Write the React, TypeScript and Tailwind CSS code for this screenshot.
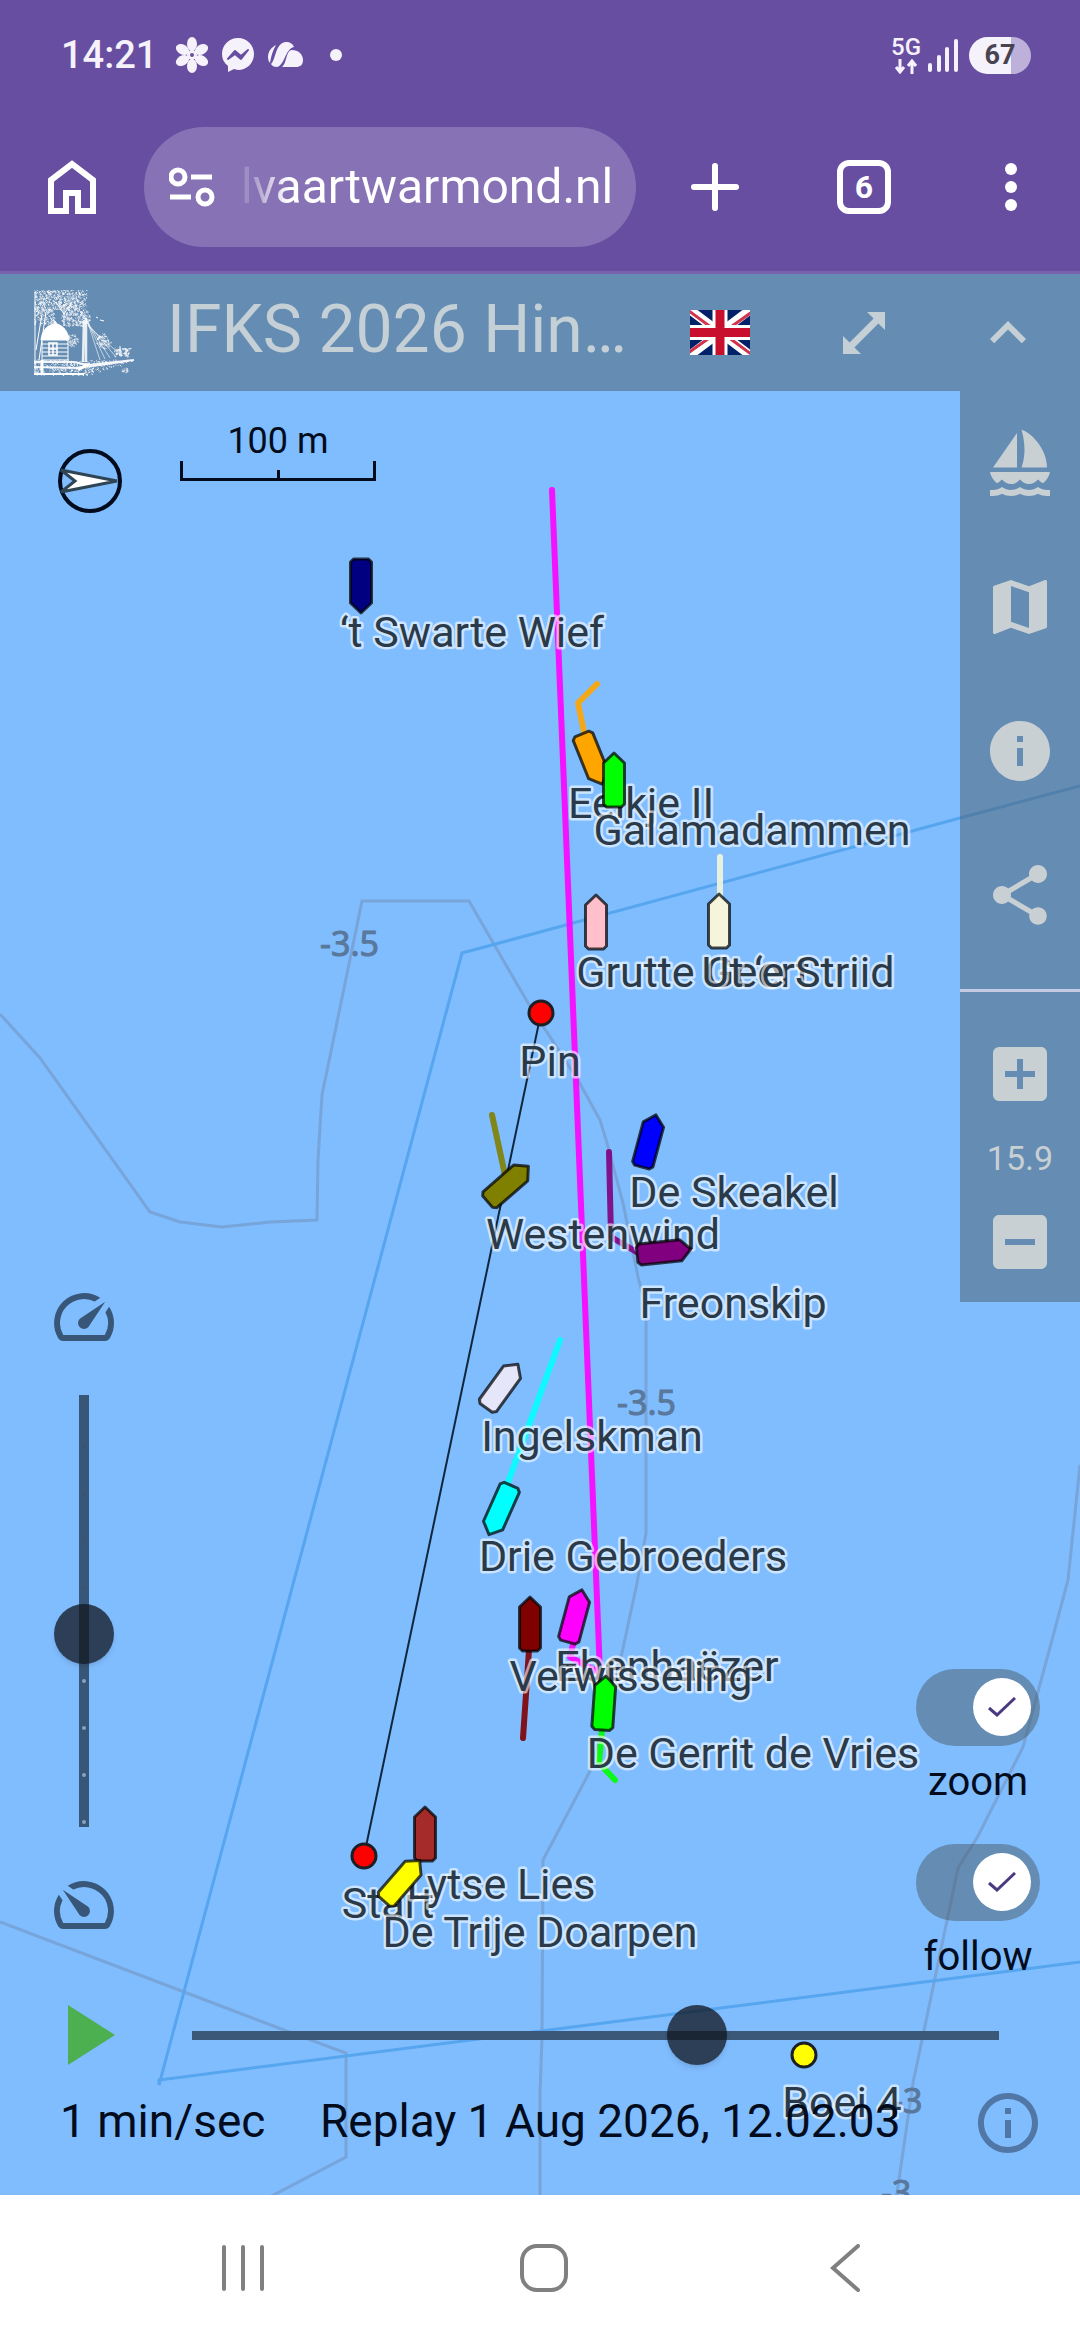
import { useState } from "react";
import type { ReactNode } from "react";
import {
  MdAddBox,
  MdExpandLess,
  MdIndeterminateCheckBox,
  MdInfo,
  MdMap,
  MdOutlineInfo,
  MdSailing,
  MdShare,
  MdSpeed,
} from "react-icons/md";

type Boat = { name: string; x: number; y: number; turn: number; color: string; track?: string; label: [number, number] };

const boats: Boat[] = [
  { name: "‘t Swarte Wief", x: 361, y: 586, turn: 180, color: "#000080", label: [472, 647] },
  { name: "Eelkje II", x: 592, y: 759, turn: 158, color: "#ffa500", track: "597,684 578,703 584,732", label: [641, 818] },
  { name: "Galamadammen", x: 614, y: 780, turn: 0, color: "#00ff00", label: [752, 845] },
  { name: "Grutte Geert", x: 596, y: 922, turn: 0, color: "#ffc0cb", label: [693, 987] },
  { name: "Ut ‘e Striid", x: 719, y: 921, turn: 0, color: "#f5f5dc", track: "720,857 720,900", label: [798, 987] },
  { name: "De Skeakel", x: 649, y: 1141, turn: 15, color: "#0000ff", label: [734, 1207] },
  { name: "Westenwind", x: 508, y: 1184, turn: 49, color: "#808000", track: "492,1115 505,1175", label: [603, 1249] },
  { name: "Freonskip", x: 664, y: 1252, turn: 84, color: "#800080", track: "609,1152 611,1237 640,1254", label: [733, 1318] },
  { name: "Ingelskman", x: 502, y: 1386, turn: 36, color: "#e6e6fa", label: [592, 1451] },
  { name: "Drie Gebroeders", x: 500, y: 1510, turn: 204, color: "#00ffff", track: "560,1340 507,1485", label: [633, 1571] },
  { name: "Ebenhaëzer", x: 575, y: 1616, turn: 15, color: "#ff00ff", track: "552,490 600,1673 570,1657 574,1640", label: [667, 1681] },
  { name: "Verwisseling", x: 530, y: 1624, turn: 0, color: "#800000", track: "523,1738 529,1650", label: [631, 1691] },
  { name: "De Gerrit de Vries", x: 604, y: 1703, turn: 4, color: "#00ff00", track: "615,1780 599,1763 602,1730", label: [753, 1768] },
  { name: "Lytse Lies", x: 425, y: 1834, turn: 0, color: "#a52a2a", label: [501, 1899] },
  { name: "De Trije Doarpen", x: 402, y: 1881, turn: 41, color: "#ffff00", label: [540, 1947] },
];

const marks = [
  { name: "Pin", x: 541, y: 1013, color: "#ff0000", label: [550, 1076] },
  { name: "Start", x: 364, y: 1856, color: "#ff0000", label: [388, 1918] },
  { name: "Boei 4", x: 804, y: 2055, color: "#ffff00", label: [842, 2117] },
];

const contours = [
  "0,1014 40,1058 150,1212 180,1222 222,1227 270,1222 317,1220 318,1160 322,1095 362,901 469,901 528,1003 578,1080 600,1120 607,1143 623,1203 638,1277 646,1307 646,1533 637,1583 622,1653 590,1771 543,1860 542,2037 540,2093 540,2200",
  "0,1922 179,1990 284,2030 346,2053 346,2157 264,2200",
  "1080,1465 1068,1580 1052,1640 1023,1747 978,1836 958,1868 913,2083 896,2200",
];

const trackPaths = boats.filter((b) => b.track);

function Label({ x, y, children }: { x: number; y: number; children: ReactNode }) {
  return (
    <text
      x={x}
      y={y}
      textAnchor="middle"
      className="fill-[#2b3a48] stroke-white/60 stroke-[5px] text-[43px] [paint-order:stroke]"
      strokeLinejoin="round"
    >
      {children}
    </text>
  );
}

function RaceMap() {
  return (
    <svg
      className="absolute inset-0 size-full"
      viewBox="0 274 1080 1921"
      preserveAspectRatio="xMidYMid slice"
      role="img"
      aria-label="Race map"
    >
      <rect x="-2000" y="-2000" width="6000" height="6000" fill="#80bdff" />
      <g fill="none" stroke="#6a7c9c" strokeOpacity=".38" strokeWidth="3">
        {contours.map((points) => (
          <polyline key={points} points={points} />
        ))}
      </g>
      <g className="fill-[#59789c] stroke-[#59789c] font-['Noto_Sans'] text-[34px]">
        <text x="320" y="956">-3.5</text>
        <text x="617" y="1415">-3.5</text>
        <text x="892" y="2113">-3</text>
        <text x="881" y="2205">-3</text>
      </g>
      <polyline points="1080,786 960,818 540,932 462,953 159,2085 159,2080 760,2003 1080,1962" fill="none" stroke="#56a5ef" strokeWidth="3" />
      <line x1="541" y1="1013" x2="364" y2="1856" stroke="#10263d" strokeWidth="2" />
      {trackPaths.map((b) => (
        <polyline
          key={b.name}
          points={b.track}
          fill="none"
          stroke={b.color}
          strokeOpacity=".9"
          strokeWidth="6"
          strokeLinecap="round"
          strokeLinejoin="round"
        />
      ))}
      {marks.map((m) => (
        <g key={m.name}>
          <Label x={m.label[0]} y={m.label[1]}>{m.name}</Label>
          <circle cx={m.x} cy={m.y} r="12" fill={m.color} stroke="#1c1f24" strokeWidth="3" />
        </g>
      ))}
      {boats.map((b) => (
        <g key={b.name}>
          <Label x={b.label[0]} y={b.label[1]}>{b.name}</Label>
          <path
            transform={`translate(${b.x} ${b.y}) rotate(${b.turn})`}
            d="M0-27 10.500-17V24L7.500 27H-7.500L-10.500 24V-17Z"
            fill={b.color}
            stroke="#000"
            strokeOpacity=".72"
            strokeWidth="3"
            strokeLinejoin="round"
          />
        </g>
      ))}
    </svg>
  );
}

function StatusBar() {
  return (
    <div className="flex h-[110px] items-center justify-between pr-[49px] pl-[61px] text-[#f6f2fb]">
      <div className="flex items-center">
        <span className="w-[114px] text-[38px] font-medium">14:21</span>
        <svg viewBox="0 0 34 36" className="h-9 w-[34px]" fill="currentColor" aria-hidden="true">
          {[0, 60, 120, 180, 240, 300].map((a) => (
            <ellipse key={a} cx="17" cy="7" rx="5" ry="7" transform={`rotate(${a} 17 18)`} />
          ))}
          <circle cx="17" cy="18" r="5" />
          <circle cx="17" cy="18" r="2" fill="#674ea1" />
        </svg>
        <svg viewBox="0 0 34 36" className="ml-3 h-9 w-[34px]" aria-hidden="true">
          <path d="M17 1C8 1 1 8 1 17c0 5 2 9 6 12v6l6-3 4 1c9 0 16-7 16-16S26 1 17 1z" fill="currentColor" />
          <path d="m7 22 7-8 6 5 7-6-7 9-6-5z" fill="#674ea1" stroke="#674ea1" strokeWidth="2" strokeLinejoin="round" />
        </svg>
        <svg viewBox="0 0 36 26" className="ml-3 h-[26px] w-9" fill="currentColor" aria-hidden="true">
          <path d="M9 3C5 5 1 9 1 15c0 3 1 5 2 6C4 14 6 8 9 3z" />
          <path d="M19 0c4 0 7 2 8 5-9 2-9 18-17 20-3 0-5-1-6-3C9 18 8 1 19 0z" />
          <path d="M25 8c6 0 11 4 11 10 0 5-3 7-7 7H15c5-4 4-17 10-17z" />
        </svg>
        <span className="ml-[27px] size-3 rounded-full bg-current" />
      </div>
      <div className="flex items-center">
        <div className="flex flex-col items-center">
          <span className="text-[24px] leading-5 font-medium">5G</span>
          <svg viewBox="0 0 24 15" className="mt-0.5 h-[15px] w-6" fill="none" stroke="currentColor" strokeWidth="3" aria-hidden="true">
            <path d="M6 0v12M2 8l4 5 4-5M18 15V3M14 7l4-5 4 5" />
          </svg>
        </div>
        <svg viewBox="0 0 32 34" className="ml-[6px] h-[34px] w-8" stroke="currentColor" strokeWidth="4" strokeLinecap="round" aria-hidden="true">
          <path d="M3 27v5M12 19v13M20 11v21M29 3v29" />
        </svg>
        <span className="ml-[10px] flex h-[37px] w-[62px] items-center justify-center rounded-full bg-linear-to-r from-[#f6f2fb] from-67% to-[#bdb0da] to-67% text-[27px] font-bold text-[#474350]">
          67
        </span>
      </div>
    </div>
  );
}

function BrowserBar() {
  return (
    <div className="flex items-start border-b-3 border-[#7862ad] pt-[17px] pb-6 text-white">
      <button aria-label="Home" className="flex h-30 w-36 items-center justify-center">
        <svg viewBox="0 0 48 54" className="h-[54px] w-12" fill="none" stroke="currentColor" strokeWidth="6" aria-hidden="true">
          <path d="M3 51V20L24 4l21 16v31H30V33H18v18z" />
        </svg>
      </button>
      <div className="flex h-30 min-w-0 flex-1 items-center rounded-full bg-[#8772b5] pl-[25px]">
        <button aria-label="Site information" className="shrink-0">
          <svg viewBox="0 0 46 40" className="h-10 w-[46px]" fill="none" stroke="currentColor" strokeWidth="5" aria-hidden="true">
            <circle cx="9" cy="10" r="7" />
            <path d="M22 10h21M1 30h21" />
            <circle cx="36" cy="30" r="7" />
          </svg>
        </button>
        <input
          aria-label="Address"
          readOnly
          value="lvaartwarmond.nl"
          className="ml-[26px] w-0 flex-1 bg-transparent text-[48px] outline-none [mask-image:linear-gradient(to_right,rgb(0_0_0/.2)_8px,#000_48px)]"
        />
      </div>
      <button aria-label="New tab" className="ml-[7px] flex h-30 w-36 items-center justify-center">
        <svg viewBox="0 0 48 48" className="size-12" stroke="currentColor" strokeWidth="6" strokeLinecap="round" aria-hidden="true">
          <path d="M24 3v42M3 24h42" />
        </svg>
      </button>
      <button aria-label="Switch tabs" className="flex h-30 w-[154px] items-center justify-center">
        <span className="flex size-[54px] items-center justify-center rounded-xl border-6 border-white text-[32px] font-bold">6</span>
      </button>
      <button aria-label="Menu" className="flex h-30 w-[139px] flex-col items-center justify-center gap-[6px]">
        <span className="size-3 rounded-full bg-white" />
        <span className="size-3 rounded-full bg-white" />
        <span className="size-3 rounded-full bg-white" />
      </button>
    </div>
  );
}

/* Small fixed-seed generator, so the engraving's foliage is the same on every render. */
function speckle(count: number, seed: number, inside: (x: number, y: number) => boolean) {
  let s = seed;
  const next = () => (s = (s * 16807) % 2147483647) / 2147483647;
  let d = "";
  for (let i = 0; i < count; i++) {
    const x = next() * 100;
    const y = next() * 86;
    const dx = next() * 3 - 1;
    const dy = next() * 3 - 1;
    if (inside(x, y)) d += `M${x.toFixed(1)} ${y.toFixed(1)}l${dx.toFixed(1)} ${dy.toFixed(1)}`;
  }
  return d;
}

const foliage = speckle(
  5200,
  71,
  (x, y) =>
    (x < 54 - y * 0.2 && y < 20) ||
    (x < 20 && y < 34 && y >= 18) ||
    (Math.hypot(x - 42, (y - 28) * 1.3) < 15 && y < 36) ||
    (Math.hypot(x - 70, y - 50) < 8 && y > x - 26) ||
    Math.hypot(x - 38, y - 50) < 6 ||
    (x > 80 && x < 96 && y > 58 && y < 66) ||
    (x > 88 && x < 94 && y > 78 && y < 82),
);
const ground = speckle(2600, 19, (x, y) => y > 70 && y < 85 && x < 100 - (y - 70) * 3);

function EngravingLogo() {
  return (
    <svg viewBox="0 0 100 86" className="h-[86px] w-[100px] shrink-0" fill="none" stroke="#fff" aria-label="Kaagvaart Warmond">
      <path d={foliage} strokeWidth="1" strokeOpacity=".7" />
      <path d={ground} strokeWidth="1" strokeOpacity=".8" />
      <path d="M7 50c1-9 6-15 13-16l1-3 2 3c7 2 11 8 12 16z" fill="#fff" />
      <path d="M8 51v19M34 51v19M8 54h26M8 58h26M8 62h26M8 66h26M8 70h26" strokeWidth="1" />
      <path d="M15 53h8v12h-8zM19 53v12M15 59h8" strokeWidth="1.500" />
      <path d="M12 22 5 70M8 24 2 60M1 2v82M30 14v22M22 12l8 12 8-12" strokeWidth="1" />
      <path d="M52 28v44M50 30l-1 42" strokeWidth="2.500" strokeOpacity=".85" />
      <path d="M53 30 66 70M53 31l18 38M53 32l23 36M54 34l28 33M54 36l34 30" strokeWidth=".6" />
      <path d="M0 72h40l14 3 46-5M0 77l44 1 50-7" strokeWidth="2" strokeOpacity=".9" />
      <path d="M0 84h50" strokeWidth="2" />
      <path d="M8 70v15M54 74l-10 6" strokeWidth="3" />
      <path d="m62 27 2 1M66 30l4 1" strokeWidth="1" />
      <path d="M86 66V56M92 66v-8" strokeWidth="1" />
    </svg>
  );
}

function UnionFlag() {
  return (
    <svg viewBox="0 0 60 45" className="h-[45px] w-15" aria-hidden="true">
      <path d="M0 0h60v45H0z" fill="#012169" />
      <path d="m0 0 60 45M60 0 0 45" stroke="#fff" strokeWidth="9" />
      <path d="M-1 1 22 18M61 44 38 27M62 2 38 19M-2 43l24-17" stroke="#c8102e" strokeWidth="3" strokeOpacity=".85" />
      <path d="M30 0v45M0 22.500h60" stroke="#fff" strokeWidth="15" />
      <path d="M30 0v45M0 22.500h60" stroke="#c8102e" strokeWidth="9" />
    </svg>
  );
}

function AppHeader() {
  return (
    <header className="flex h-[117px] items-center bg-[#4a5b67]/50 pl-[34px] text-[#c5d0d6]">
      <EngravingLogo />
      <h1 className="ml-[33px] min-w-0 flex-1 truncate pb-[5px] text-[66px] leading-[76px]">IFKS 2026 Hin…</h1>
      <button aria-label="Language: English" className="flex w-36 justify-center">
        <UnionFlag />
      </button>
      <button aria-label="Full screen" className="flex w-36 justify-center">
        <svg viewBox="0 0 24 24" className="size-18" fill="currentColor" aria-hidden="true">
          <path d="M19 5v6l-2.200-2.200-8 8L11 19H5v-6l2.200 2.200 8-8L13 5z" />
        </svg>
      </button>
      <button aria-label="Collapse" className="flex w-36 justify-center">
        <MdExpandLess className="size-18" />
      </button>
    </header>
  );
}

function PanelButton({ label, children }: { label: string; children: ReactNode }) {
  return (
    <button aria-label={label} className="flex h-36 w-full items-center justify-center text-[72px]">
      {children}
    </button>
  );
}

function SidePanel() {
  return (
    <nav className="w-30 bg-[#4a5b67]/50 text-[#c8d0d4]">
      <PanelButton label="Boats"><MdSailing /></PanelButton>
      <PanelButton label="Map"><MdMap /></PanelButton>
      <PanelButton label="Information"><MdInfo /></PanelButton>
      <PanelButton label="Share"><MdShare /></PanelButton>
      <hr className="mt-[22px] border-t-3 border-[#c5cae3]" />
      <div className="flex flex-col items-center pt-[46px] pb-[24px]">
        <button aria-label="Zoom in" className="text-[72px]"><MdAddBox /></button>
        <output className="py-6 text-[34px] leading-12">15.9</output>
        <button aria-label="Zoom out" className="text-[72px]"><MdIndeterminateCheckBox /></button>
      </div>
    </nav>
  );
}

function Compass() {
  return (
    <svg viewBox="0 0 64 64" className="mt-7 size-16" aria-label="Compass">
      <circle cx="32" cy="32" r="30" fill="none" stroke="#020c1c" strokeWidth="4" />
      <path d="M59 32 3 21l14 11L3 43z" fill="#fff" stroke="#2f4555" strokeWidth="3" />
    </svg>
  );
}

function ScaleBar() {
  return (
    <div className="flex w-[196px] flex-col text-[#020c1c]">
      <span className="text-center text-[36px] leading-10">100 m</span>
      <div className="flex h-5 items-end justify-center border-x-3 border-b-3 border-current">
        <span className="h-2 w-[3px] bg-current" />
      </div>
    </div>
  );
}

function SpeedControl() {
  const [speed, setSpeed] = useState(4);
  return (
    <div className="flex flex-col items-center gap-[17px] text-[72px] text-[#385778]">
      <MdSpeed aria-hidden="true" />
      <div className="relative h-[482px] w-15">
        <div className="absolute inset-y-[25px] left-[25px] flex w-[10px] flex-col items-center justify-between bg-[#385778] py-[3px]">
          {[9, 8, 7, 6, 5, 4, 3, 2, 1, 0].map((step) => (
            <span key={step} className={step < speed ? "size-1 rounded-full bg-[#86a3bd]" : "size-1 rounded-full bg-[#3a5470]"} />
          ))}
        </div>
        <input
          type="range"
          aria-label="Replay speed"
          min={0}
          max={9}
          value={speed}
          onChange={(e) => setSpeed(Number(e.target.value))}
          className="absolute inset-0 h-full w-15 appearance-none bg-transparent [direction:rtl] [writing-mode:vertical-lr] [&::-webkit-slider-thumb]:size-15 [&::-webkit-slider-thumb]:appearance-none [&::-webkit-slider-thumb]:rounded-full [&::-webkit-slider-thumb]:bg-[#10161e]/75 [&::-webkit-slider-thumb]:shadow-md"
        />
      </div>
      <MdSpeed className="-scale-x-100" aria-hidden="true" />
    </div>
  );
}

function Toggle({ label }: { label: string }) {
  const [on, setOn] = useState(true);
  return (
    <label className="flex w-31 flex-col items-center gap-3 text-[40px] leading-12 text-[#020c1c]">
      <span className="relative h-[77px] w-31">
        <input
          type="checkbox"
          role="switch"
          checked={on}
          onChange={() => setOn(!on)}
          className="peer block size-full appearance-none rounded-full bg-[#4a5b67]/50"
        />
        <span className="pointer-events-none absolute top-[9px] left-[10px] flex size-[58px] items-center justify-center rounded-full bg-white peer-checked:left-[57px]">
          <svg viewBox="0 0 28 20" className="h-5 w-7" fill="none" stroke="#4b3a80" strokeWidth="3" aria-hidden="true">
            <path d="m1 11 8 7L27 1" />
          </svg>
        </span>
      </span>
      {label}
    </label>
  );
}

function ReplayBar() {
  const [time, setTime] = useState(626);
  return (
    <footer className="pt-6 pb-9 text-[46px] text-[#020c1c]">
      <div className="flex h-15 items-center pr-[51px] pl-[68px]">
        <button aria-label="Play">
          <svg viewBox="0 0 47 60" className="h-15 w-[47px]" aria-hidden="true">
            <path d="M0 0v60l47-30z" fill="#4caf50" />
          </svg>
        </button>
        <div className="relative ml-[47px] h-15 flex-1">
          <div className="absolute inset-x-[30px] top-[26px] h-[9px] bg-[#3b5878]" />
          <input
            type="range"
            aria-label="Replay time"
            min={0}
            max={1000}
            value={time}
            onChange={(e) => setTime(Number(e.target.value))}
            className="absolute inset-0 h-15 w-full appearance-none bg-transparent [&::-webkit-slider-thumb]:size-15 [&::-webkit-slider-thumb]:appearance-none [&::-webkit-slider-thumb]:rounded-full [&::-webkit-slider-thumb]:bg-[#10161e]/75 [&::-webkit-slider-thumb]:shadow-md"
          />
        </div>
      </div>
      <div className="mt-[22px] flex h-18 items-center pr-9 pl-[60px]">
        <span className="w-[260px] pb-1">1 min/sec</span>
        <span className="flex-1 pb-1 whitespace-nowrap">Replay 1 Aug 2026, 12.02.03</span>
        <button aria-label="About this replay" className="text-[72px] text-[#5077a6]"><MdOutlineInfo /></button>
      </div>
    </footer>
  );
}

function SystemNav() {
  return (
    <div className="grid h-[145px] grid-cols-3 items-center bg-white pr-21 pl-23 text-[#808080]">
      <button aria-label="Recent apps" className="flex justify-center">
        <svg viewBox="0 0 48 48" className="size-12" stroke="currentColor" strokeWidth="4" strokeLinecap="round" aria-hidden="true">
          <path d="M5 3v42M24 3v42M43 3v42" />
        </svg>
      </button>
      <button aria-label="Home screen" className="flex justify-center">
        <svg viewBox="0 0 48 48" className="size-12" fill="none" stroke="currentColor" strokeWidth="4" aria-hidden="true">
          <rect x="2" y="2" width="44" height="44" rx="15" />
        </svg>
      </button>
      <button aria-label="Back" className="flex justify-center">
        <svg viewBox="0 0 30 48" className="h-12 w-[30px]" fill="none" stroke="currentColor" strokeWidth="4" strokeLinecap="round" aria-hidden="true">
          <path d="M28 2 3 24l25 22" />
        </svg>
      </button>
    </div>
  );
}

export default function App() {
  return (
    <div className="flex min-h-screen flex-col bg-[#674ea1] font-[Roboto,'Liberation_Sans',sans-serif]">
      <StatusBar />
      <BrowserBar />
      <main className="relative flex flex-1 flex-col overflow-hidden bg-[#80bdff]">
        <RaceMap />
        <div className="relative flex flex-1 flex-col">
          <AppHeader />
          <div className="flex flex-1 justify-between">
            <div className="flex flex-col items-start justify-between pb-10">
              <div className="flex items-start gap-[58px] pt-[30px] pl-[58px]">
                <Compass />
                <ScaleBar />
              </div>
              <div className="pl-12">
                <SpeedControl />
              </div>
            </div>
            <div className="flex flex-col items-end justify-between">
              <SidePanel />
              <div className="flex flex-col gap-[38px] pr-10">
                <Toggle label="zoom" />
                <Toggle label="follow" />
              </div>
            </div>
          </div>
          <ReplayBar />
        </div>
      </main>
      <SystemNav />
    </div>
  );
}
